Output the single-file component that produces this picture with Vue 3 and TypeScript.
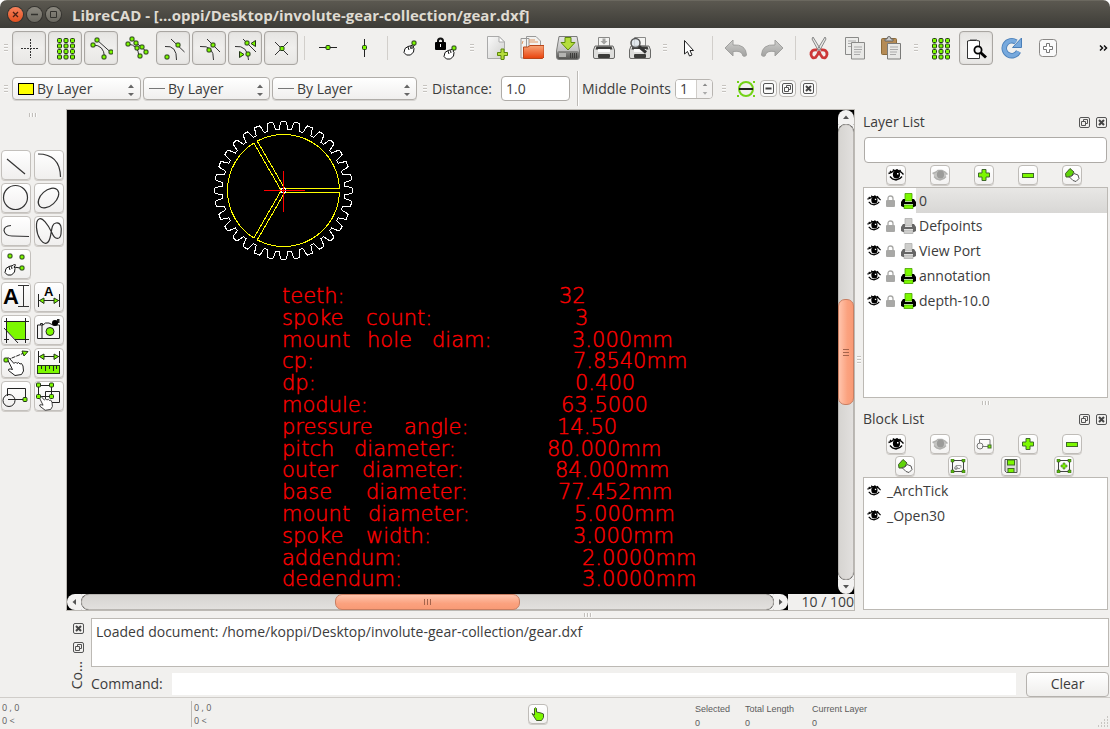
<script setup lang="ts">
import { ref } from 'vue'

type Item = { kind: 'btn' | 'sep' | 'grip'; icon?: string; label?: string; on?: boolean }
const b = (icon: string, label: string, on = false): Item => ({ kind: 'btn', icon, label, on })
const sep: Item = { kind: 'sep' }
const grip: Item = { kind: 'grip' }

const mainBar: Item[] = [
  grip,
  b('free', 'Free snap', true), b('grid', 'Snap on grid', true), b('ends', 'Snap on endpoints', true),
  b('entity', 'Snap on entity'), b('center', 'Snap center', true), b('middle', 'Snap middle', true),
  b('dist', 'Snap distance', true), b('inter', 'Snap intersection', true),
  sep, b('horiz', 'Restrict horizontal'), b('vert', 'Restrict vertical'),
  sep, b('relzero', 'Set relative zero'), b('lockzero', 'Lock relative zero'),
  grip, b('new', 'New'), b('open', 'Open'), b('save', 'Save'), b('print', 'Print'), b('preview', 'Print preview'),
  grip, b('pointer', 'Select'),
  sep, b('undo', 'Undo'), b('redo', 'Redo'),
  sep, b('cut', 'Cut'), b('copy', 'Copy'), b('paste', 'Paste'),
  grip, b('grid', 'Grid'), b('draft', 'Draft', true), b('reload', 'Redraw'), b('zoomin', 'Zoom in'),
]

type Glyph = { x: number; y: number; size: number }
type Tool = { icon: string; label: string; glyph?: Glyph }
const t = (icon: string, label: string, glyph?: Glyph): Tool => ({ icon, label, glyph })
const tools: (Tool | null)[] = [
  t('t-line', 'Lines'), t('t-arc', 'Arcs'),
  t('t-circle', 'Circles'), t('t-ellipse', 'Ellipses'),
  t('t-poly', 'Polylines'), t('t-spline', 'Splines'),
  t('t-points', 'Points'), null,
  t('t-text', 'Text', { x: 2, y: 22, size: 22 }), t('t-dim', 'Dimensions', { x: 10, y: 14, size: 13 }),
  t('t-hatch', 'Hatch'), t('t-image', 'Image'),
  t('t-modify', 'Modify'), t('t-measure', 'Measure'),
  t('t-block', 'Blocks'), t('t-select', 'Select'),
]

const layers = [
  { name: '0', print: true }, { name: 'Defpoints', print: false }, { name: 'View Port', print: false },
  { name: 'annotation', print: true }, { name: 'depth-10.0', print: true },
]
const blocks = ['_ArchTick', '_Open30']
const layerButtons = [['eye', 'Show all'], ['eye-off', 'Hide all'], ['plus', 'Add layer'], ['minus', 'Remove layer'], ['edit', 'Edit layer']]
const blockButtons = [['eye', 'Show all'], ['eye-off', 'Hide all'], ['blk', 'Create block'], ['plus', 'Add block'], ['minus', 'Remove block']]
const blockButtons2 = [['edit', 'Rename block'], ['blk-edit', 'Edit block'], ['blk-save', 'Save block'], ['blk-insert', 'Insert block']]

const distance = ref('1.0')
const middle = ref('1')
const command = ref('')
const filter = ref('')

type Word = [number, string]
const annotations: Word[][] = [
  [[215, 'teeth:'], [492, '32']],
  [[215, 'spoke'], [299, 'count:'], [508, '3']],
  [[215, 'mount'], [300, 'hole'], [365, 'diam:'], [505, '3.000mm']],
  [[215, 'cp:'], [506, '7.8540mm']],
  [[215, 'dp:'], [508, '0.400']],
  [[215, 'module:'], [494, '63.5000']],
  [[215, 'pressure'], [337, 'angle:'], [490, '14.50']],
  [[215, 'pitch'], [287, 'diameter:'], [480, '80.000mm']],
  [[215, 'outer'], [295, 'diameter:'], [488, '84.000mm']],
  [[215, 'base'], [299, 'diameter:'], [491, '77.452mm']],
  [[215, 'mount'], [301, 'diameter:'], [507, '5.000mm']],
  [[215, 'spoke'], [299, 'width:'], [506, '3.000mm']],
  [[215, 'addendum:'], [515, '2.0000mm']],
  [[215, 'dedendum:'], [515, '3.0000mm']],
]
const baseline = (i: number) => Math.round(193 + i * 21.8)

const polar = (r: number, a: number) => `${(r * Math.cos(a)).toFixed(2)} ${(-r * Math.sin(a)).toFixed(2)}`

function gearOutline(teeth: number): string {
  const step = (2 * Math.PI) / teeth
  const pts: string[] = []
  for (let i = 0; i < teeth; i++) {
    const a = i * step
    pts.push(polar(61, a - 0.072), polar(64, a - 0.058), polar(68, a - 0.046), polar(69, a - 0.034))
    pts.push(polar(69, a + 0.034), polar(68, a + 0.046), polar(64, a + 0.058), polar(61, a + 0.072))
  }
  return `M${pts.join('L')}Z`
}

function pocket(k: number): string {
  const third = (2 * Math.PI) / 3
  const off = Math.asin(2 / 56)
  const a0 = k * third + off
  const a1 = (k + 1) * third - off
  const corner = 2 / Math.sin(Math.PI / 3)
  return `M${polar(corner, (a0 + a1) / 2)}L${polar(56, a0)}A56 56 0 0 0 ${polar(56, a1)}Z`
}
const outline = gearOutline(32)
const pockets = [0, 1, 2].map(pocket)
</script>

<template>
  <svg class="sprite" aria-hidden="true">
    <defs>
      <linearGradient id="g-page" x1="0" y1="0" x2="1" y2="1"><stop offset="0" stop-color="#fafafa" /><stop offset="1" stop-color="#cfcfcd" /></linearGradient>
      <linearGradient id="g-fold" x1="0" y1="0" x2="0" y2="1"><stop offset="0" stop-color="#f8a578" /><stop offset="1" stop-color="#e8420c" /></linearGradient>
      <linearGradient id="g-metal" x1="0" y1="0" x2="0" y2="1"><stop offset="0" stop-color="#e8e8e8" /><stop offset="1" stop-color="#a6a6a6" /></linearGradient>
      <linearGradient id="g-front" x1="0" y1="0" x2="0" y2="1"><stop offset="0" stop-color="#8c8c8a" /><stop offset="1" stop-color="#555553" /></linearGradient>
      <linearGradient id="g-grey" x1="0" y1="0" x2="0" y2="1"><stop offset="0" stop-color="#cfcfcd" /><stop offset="1" stop-color="#a2a2a0" /></linearGradient>
      <rect id="dot" x="-2" y="-2" width="4" height="4" rx="1" fill="#7cf800" stroke="#24381a" />
      <path id="hand" d="M2 5.500 5 3.500 9 2.500 10.500 1 11.500 2 10 4 11 5.500 10.500 9 7.500 12 3.500 12 1 9.500Z M5 4 6 7M7.500 3.500 8 6" fill="#fff" stroke="#111" />
      <path id="bighand" d="M1 1.500Q2 0 3.500 1.500L8 6.500 9.500 5 11 6.500 12.500 5.500 14 7 15.500 6.500 17 9 17.500 14 15.500 17.500 9 18.500 2.500 13.500Q2 11.500 4.500 12L6.500 12.500Z" fill="#fff" stroke="#222" />
      <g id="printer"><path d="M6.500 1.500H17.500V10H6.500Z" fill="#f4f4f2" stroke="#8a8a88" /><path d="M3 10H21L22.500 14V21Q22.500 22.500 21 22.500H3Q1.500 22.500 1.500 21V14Z" fill="#dededc" stroke="#6a6a68" /><path d="M4.500 10.500H19.500L20.500 13.500H3.500Z" fill="#3c3c3a" /><rect x="6" y="13" width="12" height="3" fill="#fafafa" /><rect x="6" y="18" width="12" height="4" rx="1" fill="#3c3c3a" /></g>
    </defs>
    <symbol id="free" viewBox="0 0 24 24"><path d="M4 12.500H22M13.500 3V22" stroke="#333" stroke-dasharray="2 1" fill="none" /></symbol>
    <symbol id="grid" viewBox="0 0 24 24"><g v-for="y in 4" :key="y"><use v-for="x in 3" :key="x" href="#dot" :x="x * 6.5" :y="y * 5.5 - 1" /></g></symbol>
    <symbol id="ends" viewBox="0 0 24 24"><path d="M8 4 22 16.500M4 9Q15 9 15.500 21" fill="none" stroke="#333" /><use href="#dot" x="8" y="4" /><use href="#dot" x="22" y="16" /><use href="#dot" x="4" y="9" /><use href="#dot" x="15" y="21" /></symbol>
    <symbol id="entity" viewBox="0 0 24 24"><path d="M7 3 22 16M3 8Q13 9 14 20" fill="none" stroke="#333" /><use href="#dot" x="7" y="3" /><use href="#dot" x="3" y="8" /><use href="#dot" x="11" y="7" /><use href="#dot" x="12" y="12" /><use href="#dot" x="17" y="11" /><use href="#dot" x="21" y="16" /><use href="#dot" x="15" y="20" /></symbol>
    <symbol id="center" viewBox="0 0 24 24"><path d="M10 3 23.500 16M4 10.500Q16 9 15.500 24" fill="none" stroke="#333" /><use href="#dot" x="17" y="9" /><use href="#dot" x="6" y="21" /></symbol>
    <symbol id="middle" viewBox="0 0 24 24"><path d="M10 3 23 16M3 10.500Q17 9 16.500 24" fill="none" stroke="#333" /><use href="#dot" x="16" y="9" /><use href="#dot" x="12" y="14" /></symbol>
    <symbol id="dist" viewBox="0 0 24 24"><path d="M10 3 23 16M2 10.500Q15 9 15.500 24" fill="none" stroke="#333" /><use href="#dot" x="14" y="7" /><use href="#dot" x="15" y="18" /><path d="M22.500 4.500V10.500L18 7.500ZM6.500 15.500V21.500L11 18.500Z" fill="#7cf800" stroke="#24381a" /></symbol>
    <symbol id="inter" viewBox="0 0 24 24"><path d="M6 6 19 19M19 6 6 19" stroke="#333" /><use href="#dot" x="13" y="12.500" /></symbol>
    <symbol id="horiz" viewBox="0 0 24 24"><path d="M3 11.500H21" stroke="#222" /><use href="#dot" x="12" y="11.500" /></symbol>
    <symbol id="vert" viewBox="0 0 24 24"><path d="M12.500 3V21" stroke="#222" /><use href="#dot" x="12.500" y="11.500" /></symbol>
    <symbol id="relzero" viewBox="0 0 24 24"><use href="#hand" x="4" y="7" /><path d="M13 9V13" stroke="#111" /><use href="#dot" x="15" y="7" /></symbol>
    <symbol id="lockzero" viewBox="0 0 24 24"><path d="M3 7V5Q3 2.500 5.500 2.500T8 5V7" fill="none" stroke="#111" stroke-width="2" /><rect x="0" y="6" width="11" height="8" rx="1" fill="#000" /><rect x="5" y="8" width="1" height="3" fill="#fff" /><use href="#hand" x="8" y="11" /><use href="#dot" x="19" y="12" /></symbol>
    <symbol id="new" viewBox="0 0 24 24"><path d="M3.500.500H15L20.500 6V22.500H3.500Z" fill="url(#g-page)" stroke="#aaa" /><path d="M15 .500V6H20.500Z" fill="#fff" stroke="#aaa" /><path d="M17 13H20V16.500H23.500V19.500H20V23.500H17V19.500H13.500V16.500H17Z" fill="#b5dd3c" stroke="#5c8a08" /></symbol>
    <symbol id="open" viewBox="0 0 24 24"><path d="M1 2.500H9V22H1ZM6.500.500H16L20.500 5V15H6.500Z" fill="#f2f2f0" stroke="#999" /><path d="M2 8 3 5M9 4H15M9 6H18" stroke="#e09a68" /><path d="M3.500 11H8L10 9.500H24V21L22.500 22.500H3.500Z" fill="url(#g-fold)" stroke="#b8461a" /></symbol>
    <symbol id="save" viewBox="0 0 24 24"><path d="M3 .500H21L23.500 15V21Q23.500 23.500 21 23.500H3Q.500 23.500 .500 21V15Z" fill="url(#g-metal)" stroke="#7c7c7a" /><rect x="1" y="15" width="22" height="8" rx="2" fill="url(#g-front)" /><path d="M3 17H10V21H3Z" fill="#b4b4b2" /><path d="M14.500 17V22M16.500 17V22M18.500 17V22M20.500 17V22" stroke="#3c3c3a" /><path d="M9 1.500H15V6.500H19L12 14 5 6.500H9Z" fill="#b5dd3c" stroke="#5c8a08" /></symbol>
    <symbol id="print" viewBox="0 0 24 24"><use href="#printer" /><path d="M10.500 2.500H13.500V5H15.500L12 8.500 8.500 5H10.500Z" fill="#a4a4a2" /></symbol>
    <symbol id="preview" viewBox="0 0 24 24"><use href="#printer" /><circle cx="7.500" cy="7" r="4.500" fill="#dce4ea" fill-opacity=".8" stroke="#555" stroke-width="1.500" /><path d="M11 10.500 18 16.500" stroke="#333" stroke-width="3" /></symbol>
    <symbol id="pointer" viewBox="0 0 24 24"><path d="M7.500 4.500V18L10.500 15.500 12.500 20 15 19 13 14.500H16.500Z" fill="#fff" stroke="#222" /></symbol>
    <symbol id="undo" viewBox="0 0 24 24"><path d="M1 12 9 4V9Q22 8 22.500 19Q22 21 19 20 18 14 9 15.500V20Z" fill="url(#g-grey)" stroke="#a0a09e" /></symbol>
    <symbol id="redo" viewBox="0 0 24 24"><path d="M23 12 15 4V9Q2 8 1.500 19Q2 21 5 20 6 14 15 15.500V20Z" fill="url(#g-grey)" stroke="#a0a09e" /></symbol>
    <symbol id="cut" viewBox="0 0 24 24"><path d="M6 1 5 3 11 14 14 14ZM18 1 19 3 13 14 10 14Z" fill="#e8e8e6" stroke="#888" /><path d="M10 14Q4 13 4 18.500 5 23 8.500 21.500 11 19 12 15 13 19 15.500 21.500 19 23 20 18.500 20 13 14 14" fill="none" stroke="#cc3838" stroke-width="2.800" /></symbol>
    <symbol id="copy" viewBox="0 0 24 24"><path d="M2.500 1.500H15.500V18.500H2.500Z" fill="#ededeb" stroke="#8a8a88" /><path d="M5 5H13M5 7.500H13M5 10.500H9" stroke="#aaa" /><path d="M8.500 6.500H21.500V23H8.500Z" fill="#e8e8e6" stroke="#8a8a88" /><path d="M11 11H19M11 13.500H19M11 16H18M11 18.500H17" stroke="#aaa" /></symbol>
    <symbol id="paste" viewBox="0 0 24 24"><rect x="2.500" y="2.500" width="15" height="16" rx="1" fill="#b58b55" stroke="#8b6a3a" /><path d="M6 5V3H8Q8 .500 10 .500T12 3H14V5Z" fill="#ccc" stroke="#666" /><path d="M8.500 7.500H21.500V23H8.500Z" fill="#e8e8e6" stroke="#7a7a78" /><path d="M11 11H19M11 13.500H19M11 16H18M11 18.500H17" stroke="#aaa" /></symbol>
    <symbol id="draft" viewBox="0 0 24 24"><path d="M3.500 5V22.500H15.500V5L12.500 4.500H6Z" fill="#fff" stroke="#333" /><path d="M6 3.500H13" stroke="#999" /><circle cx="14" cy="14" r="3.600" fill="#f4f4f4" stroke="#000" stroke-width="1.800" /><path d="M16.500 16.500 22 21.500" stroke="#000" stroke-width="3" /></symbol>
    <symbol id="reload" viewBox="0 0 24 24"><path d="M18.500 15.500A7.500 7.500 0 1 1 16 6" fill="none" stroke="#4a7fb8" stroke-width="5.500" /><path d="M18.500 15.500A7.500 7.500 0 1 1 16 6" fill="none" stroke="#77a9dd" stroke-width="3.800" /><path d="M21.500 2V11.500H12.500Z" fill="#77a9dd" stroke="#4a7fb8" /></symbol>
    <symbol id="zoomin" viewBox="0 0 24 24"><rect x="3.500" y="3.500" width="17" height="17" rx="3" fill="#fafafa" stroke="#8a8886" /><path d="M10.500 7.500H13.500V10.500H16.500V13.500H13.500V16.500H10.500V13.500H7.500V10.500H10.500Z" fill="#fff" stroke="#777" /></symbol>

    <symbol id="t-line" viewBox="0 0 30 30"><path d="M6 9 24 24" stroke="#333" stroke-width="1.200" /></symbol>
    <symbol id="t-arc" viewBox="0 0 30 30"><path d="M4 4Q26 4 26.500 27" fill="none" stroke="#333" stroke-width="1.200" /></symbol>
    <symbol id="t-circle" viewBox="0 0 30 30"><circle cx="14.500" cy="14.500" r="12" fill="none" stroke="#333" stroke-width="1.200" /></symbol>
    <symbol id="t-ellipse" viewBox="0 0 30 30"><ellipse cx="14.500" cy="15" rx="12" ry="7.500" transform="rotate(-42 14.500 15)" fill="none" stroke="#333" stroke-width="1.200" /></symbol>
    <symbol id="t-poly" viewBox="0 0 30 30"><path d="M10 9.500Q3 10 3 14.500 4 20 11 20L28 20.500" fill="none" stroke="#333" stroke-width="1.200" /></symbol>
    <symbol id="t-spline" viewBox="0 0 30 30"><path d="M18 17C14 8 8 1 5 3 1 5 2 17 6 23S14 29 16 22 17 8 22 7 28 12 27 18 21 24 18 17Z" fill="none" stroke="#333" stroke-width="1.200" /></symbol>
    <symbol id="t-points" viewBox="0 0 30 30"><use href="#dot" x="9" y="7" /><use href="#dot" x="21" y="8" /><use href="#hand" x="3" y="14" /><path d="M13 18 19 19" stroke="#111" /><use href="#dot" x="21" y="19" /></symbol>
    <symbol id="t-text" viewBox="0 0 30 30"><path d="M17 3.500H28M17 24.500H28M22.500 4V24" stroke="#333" /></symbol>
    <symbol id="t-dim" viewBox="0 0 30 30"><path d="M4.500 12V25M25.500 12V25M5 18.500H25" stroke="#222" /><path d="M5.500 18.500 10 16V21.500ZM24.500 18.500 20 16V21.500Z" fill="#7cf800" stroke="#24381a" /></symbol>
    <symbol id="t-hatch" viewBox="0 0 30 30"><path d="M6 6H24V24H14L6 16Z" fill="#7cf800" /><path d="M3 6.500H28M5.500 3V28M24.500 3V28M3 24.500H8M14 24.500H28M3 13 17 28" stroke="#222" /></symbol>
    <symbol id="t-image" viewBox="0 0 30 30"><path d="M3.500 10V23.500H25.500V10H19L15 8H11.500L9 10ZM6.500 10V8.500H8.500V10M8 10V23" fill="#f4f4f4" stroke="#222" /><path d="M23 5.500H24V8" stroke="#222" stroke-width="3" fill="none" /><circle cx="21" cy="8" r="3" /><circle cx="16" cy="16.500" r="4" fill="#7cf800" stroke="#222" /></symbol>
    <symbol id="t-modify" viewBox="0 0 30 30"><path d="M6 12 23 5" stroke="#222" stroke-dasharray="4 1" /><path d="M21 3 27 3.500 23 8Z" fill="#7cf800" stroke="#24381a" /><use href="#bighand" x="5" y="9" /><use href="#dot" x="5" y="12" /></symbol>
    <symbol id="t-measure" viewBox="0 0 30 30"><path d="M4.500 3V15M25.500 3V15M5 8.500H25" stroke="#222" /><path d="M5.500 8.500 10 6V11.500ZM24.500 8.500 20 6V11.500Z" fill="#7cf800" stroke="#24381a" /><rect x="3.500" y="17.500" width="22" height="8" fill="#7cf800" stroke="#24381a" /><path d="M7.500 18V21M11.500 18V23M15.500 18V21M19.500 18V23M22.500 18V21" stroke="#222" /></symbol>
    <symbol id="t-block" viewBox="0 0 30 30"><path d="M6.500 15V7.500H24.500V17M7 18.500H24" fill="none" stroke="#222" /><circle cx="8" cy="19.500" r="6" fill="none" stroke="#222" /><use href="#dot" x="24" y="18.500" /></symbol>
    <symbol id="t-select" viewBox="0 0 30 30"><path d="M4.500 4.500H17.500V15.500H4.500ZM11.500 10.500H25.500V21.500H11.500Z" fill="none" stroke="#222" /><use href="#bighand" x="3" y="13" transform="translate(1 2.500) scale(.85)" /><use href="#dot" x="4.500" y="4" /><use href="#dot" x="17.500" y="4" /><use href="#dot" x="4.500" y="15.500" /><use href="#dot" x="17.500" y="15.500" /></symbol>

    <symbol id="eye" viewBox="0 0 16 14"><path d="M1 5 3 3.500 5 4 8 2.500 12 3 15 5.500 14 7.500 12 10.500 8 12 4 11 2 8Z" fill="#fff" /><path d="M.500 5.500 3.500 4.500 6 2.500 10 2.500 13 4 15.500 6.500M2 3 3.500 4.500M5 1.500 6 3M9 1 9 2.500M12.500 2 11.500 3.500M2 8.500 4.500 11 8 12 12 10.500 14 8.500" fill="none" stroke="#000" stroke-width="1.400" /><ellipse cx="8.500" cy="6.500" rx="3.600" ry="4" fill="#000" /><rect x="9" y="5" width="1.500" height="1.500" fill="#fff" /></symbol>
    <symbol id="eye-off" viewBox="0 0 16 14"><path d="M1 5 3 3.500 5 4 8 2.500 12 3 15 5.500 14 7.500 12 10.500 8 12 4 11 2 8Z" fill="#c4c4c2" /><path d="M.500 5.500 3.500 4.500 6 2.500 10 2.500 13 4 15.500 6.500M2 8.500 4.500 11 8 12 12 10.500 14 8.500" fill="none" stroke="#b0b0ae" stroke-width="1.400" /><ellipse cx="8.500" cy="6.500" rx="3.600" ry="4" fill="#9c9c9a" /></symbol>
    <symbol id="plus" viewBox="0 0 16 14"><path d="M6 1.500H10V5H13.500V9H10V12.500H6V9H2.500V5H6Z" fill="#7cf800" stroke="#3f6a28" /></symbol>
    <symbol id="minus" viewBox="0 0 16 14"><rect x="2.500" y="5.500" width="11" height="4" fill="#7cf800" stroke="#3f6a28" /></symbol>
    <symbol id="edit" viewBox="0 0 16 14"><path d="M1.500 5.500 6 .500 10 4 7 9 2 9Z" fill="#5fd40a" stroke="#3f5a28" /><path d="M5 8.500 8 8 10 5.500 14 7 15 10.500 12 13.500 9 12.500Z" fill="#fff" stroke="#555" /></symbol>
    <symbol id="blk" viewBox="0 0 16 14"><path d="M3.500 6V2.500H14V8.500M6 9.500H13" fill="none" stroke="#777" /><circle cx="4" cy="9" r="3" fill="none" stroke="#777" /><rect x="12" y="8" width="3" height="3" fill="#7cf800" stroke="#3f6a28" /></symbol>
    <symbol id="blk-edit" viewBox="0 0 16 14"><rect x="2.500" y="1.500" width="11" height="11" fill="none" stroke="#444" /><path d="M6 9V6.500H11V9M5 9.500H10" fill="none" stroke="#999" /><circle cx="6" cy="9" r="1.500" fill="none" stroke="#999" /><path d="M1 0H4V3H1ZM12 0H15V3H12ZM1 11H4V14H1ZM12 11H15V14H12Z" fill="#55b80c" stroke="#35561c" stroke-width=".5" /></symbol>
    <symbol id="blk-save" viewBox="0 0 16 14"><path d="M2 .500H14V13.500H3.500L2 12Z" fill="#dcdcda" stroke="#555" /><rect x="4.500" y="1" width="7" height="5" fill="#7cf800" stroke="#3f6a28" /><rect x="5" y="9.500" width="6" height="4" fill="#7cf800" stroke="#3f6a28" /></symbol>
    <symbol id="blk-insert" viewBox="0 0 16 14"><rect x="2.500" y="1.500" width="11" height="11" fill="none" stroke="#444" /><path d="M7 4H9V6H11V8H9V10H7V8H5V6H7Z" fill="#7cf800" stroke="#3f6a28" stroke-width=".6" /><path d="M1 0H4V3H1ZM12 0H15V3H12ZM1 11H4V14H1ZM12 11H15V14H12Z" fill="#55b80c" stroke="#35561c" stroke-width=".5" /></symbol>
    <symbol id="lock" viewBox="0 0 9 12"><path d="M2 6V3.500Q2 1 4.500 1T7 3.500V6" fill="none" stroke="#a8a8a6" stroke-width="1.300" /><rect x="0" y="5" width="9" height="7" rx="1" fill="#a8a8a6" /></symbol>
    <symbol id="prn-on" viewBox="0 0 15 16"><path d="M4 .500H11V8H4ZM3 12H12V15.500H3Z" fill="#7cf800" stroke="#48a000" stroke-width=".8" /><path d="M0 9 2 6H4V9H11V6H13L15 9V13L13 14H12V11H3V14H2L0 13Z" fill="#000" /></symbol>
    <symbol id="prn-off" viewBox="0 0 15 16"><path d="M4 .500H11V8H4ZM3 12H12V15.500H3Z" fill="#cdcdcb" stroke="#b0b0ae" stroke-width=".8" /><path d="M0 9 2 6H4V9H11V6H13L15 9V13L13 14H12V11H3V14H2L0 13Z" fill="#666" /></symbol>
    <symbol id="float" viewBox="0 0 11 11"><rect x=".5" y=".5" width="10" height="10" rx="1.500" fill="none" stroke="#555" /><path d="M4.500 5V2.500H8.500V6.500H6.500M2.500 4.500H6.500V8.500H2.500Z" fill="none" stroke="#555" /></symbol>
    <symbol id="close" viewBox="0 0 11 11"><rect x=".5" y=".5" width="10" height="10" rx="1.500" fill="none" stroke="#555" /><path d="M3 3 8 8M8 3 3 8" stroke="#444" stroke-width="2" /></symbol>
    <symbol id="collapse" viewBox="0 0 11 11"><rect x=".5" y=".5" width="10" height="10" rx="1.500" fill="none" stroke="#555" /><path d="M2.500 5.500H8.500" stroke="#444" stroke-width="2" /></symbol>
    <symbol id="updown" viewBox="0 0 8 12"><path d="M1 4 4 .500 7 4ZM1 9 4 12 7 9Z" fill="#666" /></symbol>
  </svg>

  <div class="window">
    <header class="titlebar">
      <button class="wm close" aria-label="Close"><svg viewBox="0 0 15 15"><path d="M5 5 10 10M10 5 5 10" stroke="#4a2014" stroke-width="1.300" /></svg></button>
      <button class="wm" aria-label="Minimize"><svg viewBox="0 0 15 15"><path d="M4 7.500H11" stroke="#33322e" stroke-width="1.300" /></svg></button>
      <button class="wm" aria-label="Maximize"><svg viewBox="0 0 15 15"><path d="M4.500 4.500H10.500V10.500H4.500Z" fill="none" stroke="#33322e" /></svg></button>
      <h1>LibreCAD - [...oppi/Desktop/involute-gear-collection/gear.dxf]</h1>
    </header>

    <nav class="toolbar" aria-label="Main tools">
      <template v-for="(it, i) in mainBar" :key="i">
        <span v-if="it.kind === 'grip'" class="grip"></span>
        <span v-else-if="it.kind === 'sep'" class="sep"></span>
        <button v-else class="tb" :class="{ on: it.on }" :aria-label="it.label"><svg><use :href="'#' + it.icon" /></svg></button>
      </template>
      <button class="more" aria-label="More tools"><svg viewBox="0 0 9 6"><path d="M1 .500 3.500 3 1 5.500M5 .500 7.500 3 5 5.500" fill="none" stroke="#111" stroke-width="1.500" /></svg></button>
    </nav>

    <nav class="toolbar second" aria-label="Pen and options">
      <span class="grip"></span>
      <div class="combo c1"><span class="swatch"></span><select aria-label="Pen color"><option>By Layer</option></select><svg><use href="#updown" /></svg></div>
      <div class="combo c2"><span class="line"></span><select aria-label="Pen width"><option>By Layer</option></select><svg><use href="#updown" /></svg></div>
      <div class="combo c3"><span class="line"></span><select aria-label="Line type"><option>By Layer</option></select><svg><use href="#updown" /></svg></div>
      <span class="grip"></span>
      <label class="dist" for="distance">Distance:</label>
      <input id="distance" v-model="distance" class="field distance" type="text" />
      <span class="vline"></span>
      <label class="mid" for="middle">Middle Points</label>
      <div class="spin">
        <input id="middle" v-model="middle" type="text" />
        <div class="steps"><button aria-label="Increase"><svg viewBox="0 0 6 4"><path d="M0 4 3 .500 6 4Z" fill="#888" /></svg></button><button aria-label="Decrease"><svg viewBox="0 0 6 4"><path d="M0 0 3 3.500 6 0Z" fill="#aaa" /></svg></button></div>
      </div>
      <span class="grip far"></span>
      <svg class="snapmid" viewBox="0 0 18 18"><circle cx="9" cy="9" r="7" fill="none" stroke="#73d216" stroke-width="2" /><path d="M2 9H16" stroke="#222" stroke-width="2" /><path d="M0 1H2V3H0ZM16 1H18V3H16ZM0 15H2V17H0ZM16 15H18V17H16Z" fill="#73d216" /></svg>
      <button class="mini" aria-label="Collapse"><svg><use href="#collapse" /></svg></button>
      <button class="mini" aria-label="Float"><svg><use href="#float" /></svg></button>
      <button class="mini last" aria-label="Close"><svg><use href="#close" /></svg></button>
    </nav>

    <div class="body">
      <aside class="left">
        <span class="hgrip"></span>
        <div class="tools">
          <template v-for="(tool, i) in tools" :key="i">
            <button v-if="tool" class="tool" :aria-label="tool.label">
              <svg viewBox="0 0 30 30"><use :href="'#' + tool.icon" width="30" height="30" /><text v-if="tool.glyph" :x="tool.glyph.x" :y="tool.glyph.y" :font-size="tool.glyph.size">A</text></svg>
            </button>
            <span v-else></span>
          </template>
        </div>
      </aside>

      <div class="rest">
        <div class="upper">
          <main class="view">
            <div class="drawing">
              <svg class="paper">
                <g transform="translate(216.500 80.500)" fill="none" shape-rendering="crispEdges">
                  <path :d="outline" stroke="#fff" />
                  <path v-for="(p, i) in pockets" :key="i" :d="p" stroke="#ff0" />
                  <circle r="2.500" stroke="#fff" />
                  <path d="M-20 0H21M0 -20V21" stroke="#f00" />
                </g>
                <g class="notes">
                  <text v-for="(row, i) in annotations" :key="i" :y="baseline(i)"><tspan v-for="(w, j) in row" :key="j" :x="w[0]">{{ w[1] }}</tspan></text>
                </g>
              </svg>
            </div>
            <div class="scroll v">
              <button class="arrow" aria-label="Scroll up"><svg viewBox="0 0 8 8"><path d="M1 6 4 2.500 7 6Z" fill="#555" /></svg></button>
              <div class="track"><span class="side"></span><span class="thumb"></span><span class="side"></span></div>
              <button class="arrow" aria-label="Scroll down"><svg viewBox="0 0 8 8"><path d="M1 2 4 5.500 7 2Z" fill="#555" /></svg></button>
            </div>
            <div class="foot">
              <div class="scroll h">
                <button class="arrow" aria-label="Scroll left"><svg viewBox="0 0 8 8"><path d="M6 1 2.500 4 6 7Z" fill="#555" /></svg></button>
                <div class="track"><span class="side"></span><span class="thumb"></span><span class="side"></span></div>
                <button class="arrow" aria-label="Scroll right"><svg viewBox="0 0 8 8"><path d="M2 1 5.500 4 2 7Z" fill="#555" /></svg></button>
              </div>
              <output class="ratio">10 / 100</output>
            </div>
          </main>

          <div class="vsplit"><span class="grip"></span></div>

          <aside class="docks">
            <section class="dock layers">
              <div class="head"><h2>Layer List</h2><button aria-label="Float layer list"><svg><use href="#float" /></svg></button><button aria-label="Close layer list"><svg><use href="#close" /></svg></button></div>
              <input v-model="filter" class="field filter" type="text" aria-label="Filter layers" />
              <div class="acts"><button v-for="a in layerButtons" :key="a[0]" class="act" :aria-label="a[1]"><svg><use :href="'#' + a[0]" /></svg></button></div>
              <ul class="list">
                <li v-for="(l, i) in layers" :key="l.name">
                  <svg class="e"><use href="#eye" /></svg><svg class="l"><use href="#lock" /></svg><svg class="p"><use :href="l.print ? '#prn-on' : '#prn-off'" /></svg>
                  <span class="name" :class="{ sel: i === 0 }">{{ l.name }}</span>
                </li>
              </ul>
            </section>
            <div class="hsplit"><span class="hgrip"></span></div>
            <section class="dock blocks">
              <div class="head"><h2>Block List</h2><button aria-label="Float block list"><svg><use href="#float" /></svg></button><button aria-label="Close block list"><svg><use href="#close" /></svg></button></div>
              <div class="acts tight"><button v-for="a in blockButtons" :key="a[0]" class="act" :aria-label="a[1]"><svg><use :href="'#' + a[0]" /></svg></button></div>
              <div class="acts four"><button v-for="a in blockButtons2" :key="a[0]" class="act" :aria-label="a[1]"><svg><use :href="'#' + a[0]" /></svg></button></div>
              <ul class="list">
                <li v-for="n in blocks" :key="n"><svg class="e"><use href="#eye" /></svg><span class="name blk">{{ n }}</span></li>
              </ul>
            </section>
          </aside>
        </div>

        <div class="bsplit"><span class="hgrip"></span></div>

        <section class="console">
          <div class="side-head">
            <button aria-label="Close command line"><svg><use href="#close" /></svg></button>
            <button aria-label="Float command line"><svg><use href="#float" /></svg></button>
            <span class="vtext">Co...</span>
          </div>
          <div class="cmd">
            <div class="log">Loaded document: /home/koppi/Desktop/involute-gear-collection/gear.dxf</div>
            <form class="prompt" @submit.prevent>
              <label for="command">Command:</label>
              <input id="command" v-model="command" type="text" />
              <button type="button" class="clear" @click="command = ''">Clear</button>
            </form>
          </div>
        </section>
      </div>
    </div>

    <footer class="status">
      <div class="coord first"><span>0 , 0</span><span>0 &lt;</span></div>
      <div class="coord second-c"><span>0 , 0</span><span>0 &lt;</span></div>
      <div class="mouse"><button class="act" aria-label="Mouse hints"><svg viewBox="0 0 16 14"><path d="M2 6.500 4.500 8V1.500Q5.500 0 6.500 1.500V5L11 6 13.500 7V10.500L11.500 13.500H6.500Z" fill="#7cf800" stroke="#3f5a28" /></svg></button></div>
      <dl>
        <div class="s1"><dt>Selected</dt><dd>0</dd></div>
        <div class="s2"><dt>Total Length</dt><dd>0</dd></div>
        <div class="s3"><dt>Current Layer</dt><dd>0</dd></div>
      </dl>
      <svg class="corner" viewBox="0 0 12 12"><path d="M10 1H11M7 4H11M4 7H11M1 10H11" stroke="#bbb8b4" stroke-dasharray="1 2" stroke-width="1.500" /></svg>
    </footer>
  </div>
</template>

<style>
html, body { background: #fff; }
body { margin: 0; }
</style>

<style scoped>
* { box-sizing: border-box; }
.sprite { position: absolute; width: 0; height: 0; }
.window {
  display: flex; flex-direction: column; height: 100vh; min-height: 640px;
  font-family: "Open Sans", "Noto Sans", sans-serif; font-size: 14px; line-height: 20px; color: #3c3c3c;
  background: #f1f0ee; border-radius: 7px 7px 0 0; overflow: hidden;
}
button, input, select { font: inherit; color: inherit; margin: 0; padding: 0; }
button { display: flex; align-items: center; justify-content: center; flex: none; background: none; border: 0; }
input { border: 0; outline: 0; min-width: 0; }
h1, h2, ul, dl, dd { margin: 0; padding: 0; }
svg { display: block; flex: none; }

.titlebar { flex: none; height: 28px; display: flex; align-items: center; gap: 4px; padding-left: 8px; background: linear-gradient(#5b5850, #3d3c37); border-top: 1px solid #6b685f; }
.titlebar h1 { margin-left: 7px; font-size: 15px; font-weight: 700; line-height: 20px; color: #dfdbd2; white-space: nowrap; }
.wm { width: 15px; height: 15px; border-radius: 50%; background: linear-gradient(#8b887f, #6b6961); box-shadow: 0 0 0 1px #34332f; }
.wm.close { background: linear-gradient(#f8825c, #e2501f); }
.wm svg { width: 15px; height: 15px; }

.toolbar { flex: none; display: flex; align-items: center; gap: 2px; height: 40px; position: relative; }
.grip { flex: none; width: 4px; height: 8px; margin: 0 3px 0 4px; background: repeating-linear-gradient(#c6c3bf 0 1px, #fbfbfa 1px 2px, transparent 2px 3px); }
.grip:first-child { margin-right: 2px; }
.sep { flex: none; width: 1px; height: 24px; margin: 0 4px; background: #d2cfcb; }
.tb { width: 34px; height: 34px; border: 1px solid transparent; border-radius: 4px; }
.tb.on { border-color: #a9a6a2; background: linear-gradient(#e6e5e3, #f0efed 50%, #e8e7e5); box-shadow: inset 0 0 2px #d0cecb; }
.tb svg { width: 24px; height: 24px; overflow: visible; }
.more { margin-left: auto; width: 14px; height: 20px; }
.more svg { width: 9px; height: 6px; }

.toolbar.second { height: 41px; }
.combo { flex: none; display: flex; align-items: center; height: 23px; padding: 0 5px; border: 1px solid #b0ada9; border-radius: 4px; background: linear-gradient(#fff, #f0efee); box-shadow: 0 1px 0 #d5d3d0; }
.combo select { flex: 1; min-width: 0; appearance: none; border: 0; background: none; outline: 0; }
.combo svg { width: 8px; height: 12px; margin-top: 2px; }
.c1 { width: 129px; }
.c2 { width: 127px; }
.c3 { width: 145px; }
.swatch { width: 16px; height: 12px; margin-right: 3px; background: #ff0; border: 1px solid #000; }
.line { width: 16px; height: 1px; margin-right: 3px; background: #777; }
.dist { width: 67px; }
.field { background: #fff; border: 1px solid #aeaba7; border-radius: 4px; }
.distance { width: 69px; height: 25px; padding: 0 4px; }
.vline { width: 2px; height: 35px; margin: 0 1px 0 5px; background: linear-gradient(90deg, #bdbab6 1px, #fff 1px); }
.mid { width: 91px; white-space: nowrap; }
.spin { display: flex; width: 38px; height: 20px; border: 1px solid #b8b5b1; border-radius: 4px; background: #fff; overflow: hidden; }
.spin input { width: 20px; padding-left: 4px; background: #fff; }
.steps { flex: 1; display: flex; flex-direction: column; background: #f3f2f1; border-left: 1px solid #d0cdc9; }
.steps button { flex: 1; }
.steps svg { width: 6px; height: 3px; }
.grip.far { margin-left: 7px; margin-right: 9px; }
.snapmid { width: 18px; height: 18px; margin-right: 3px; }
.mini { width: 17px; height: 17px; border: 1px solid #bdbab6; border-radius: 4px; background: #fafaf9; }
.mini.last { margin-left: 2px; }
.mini svg { width: 11px; height: 11px; }

.body { flex: 1; min-height: 0; display: flex; }
.left { flex: none; width: 66px; padding: 4px 1px; }
.hgrip { display: block; flex: none; width: 8px; height: 4px; margin: 0 auto; background: repeating-linear-gradient(90deg, #c2bfbb 0 1px, #fbfbfa 1px 2px, transparent 2px 3px); }
.tools { display: grid; grid-template-columns: 30px 30px; grid-auto-rows: 30px; gap: 3px; margin-top: 33px; }
.tool { border: 1px solid #c3c0bc; border-radius: 4px; background: linear-gradient(#fff, #f0efee); box-shadow: 0 1px 0 #cfccc8; width: 30px; height: 30px; }
.tool svg { width: 30px; height: 30px; fill: #000; font-family: "Liberation Sans", sans-serif; font-weight: 700; }

.rest { flex: 1; min-width: 0; display: flex; flex-direction: column; }
.upper { flex: 1; min-height: 0; display: flex; }
.view { flex: 1; min-width: 0; display: grid; grid-template-columns: minmax(0, 1fr) 16px; grid-template-rows: minmax(0, 1fr) 16px; border: 1px solid #bcb9b4; background: #000; }
.drawing { min-height: 0; overflow: hidden; }
.paper { width: 100%; height: 100%; }
.notes { fill: #f00; stroke: #f00; stroke-width: .4; font-family: "DejaVu Sans", sans-serif; font-weight: 200; font-size: 21px; }
.foot { grid-column: 1 / 3; display: flex; }
.scroll { display: flex; background: #000; }
.scroll.v { flex-direction: column; }
.scroll.h { flex: 1; }
.arrow { width: 14px; height: 16px; background: #f3f2f1; border-radius: 8px 0 0 8px; }
.arrow:last-child { border-radius: 0 8px 8px 0; }
.v .arrow { width: 16px; height: 14px; border-radius: 8px 8px 0 0; }
.v .arrow:last-child { border-radius: 0 0 8px 8px; }
.arrow svg { width: 8px; height: 8px; }
.track { flex: 1; min-width: 0; min-height: 0; display: flex; background: linear-gradient(#d6d4d1, #e2e0de); border: 1px solid #b8b5b1; border-radius: 8px; box-shadow: 0 0 0 3px #f3f2f1; clip-path: inset(0 -3px); }
.v .track { flex-direction: column; background: linear-gradient(90deg, #d6d4d1, #e2e0de); clip-path: inset(-3px 0); }
.side { flex: 254; }
.thumb { flex: 185; margin: -1px 0; border: 1px solid #c97e61; border-radius: 7px; background: repeating-linear-gradient(90deg, #a5644c 0 1px, transparent 1px 3px) center / 7px 6px no-repeat, linear-gradient(#ffc4ac, #fba27f 60%, #f99a75); }
.v .side { flex: 176; }
.v .thumb { flex: 104; margin: 0 -1px; background: repeating-linear-gradient(#a5644c 0 1px, transparent 1px 3px) center / 6px 7px no-repeat, linear-gradient(90deg, #ffc4ac, #fba27f 60%, #f99a75); }
.ratio { width: 66px; font-size: 14px; line-height: 16px; text-align: right; background: #f1f0ee; white-space: nowrap; }

.vsplit { flex: none; width: 8px; display: flex; align-items: center; }
.vsplit .grip { margin: 0 2px; }
.docks { flex: none; width: 247px; padding: 0 2px 1px 0; display: flex; flex-direction: column; }
.dock { display: flex; flex-direction: column; min-height: 0; }
.layers { flex: 289; }
.blocks { flex: 204; }
.head { flex: none; display: flex; align-items: center; gap: 6px; height: 26px; padding-right: 1px; }
.head h2 { flex: 1; font-size: 14px; font-weight: 400; line-height: 20px; }
.head svg, .side-head svg { width: 11px; height: 11px; }
.filter { flex: none; height: 26px; margin: 2px 1px 2px; width: auto; padding: 0 4px; }
.acts { flex: none; display: flex; justify-content: space-around; padding: 0 14px 0 11px; margin-bottom: 2px; }
.acts.tight { margin: 2px 0 2px; }
.acts.four { padding: 0 18px 0 15px; margin-bottom: 1px; }
.act { width: 20px; height: 20px; border: 1px solid #bfbcb8; border-radius: 4px; background: linear-gradient(#fff, #f3f2f1); box-shadow: 0 1px 0 #cfccc8; }
.act svg { width: 16px; height: 14px; }
.list { flex: 1; min-height: 0; list-style: none; background: #fff; border: 1px solid #bcb9b4; }
.list li { display: flex; align-items: center; height: 25px; padding-left: 3px; }
.list .e { width: 14px; height: 13px; }
.list .l { width: 9px; height: 12px; margin: 0 6px 0 5px; }
.list .p { width: 15px; height: 16px; }
.name { flex: 1; padding-left: 3px; line-height: 25px; }
.name.sel { background: linear-gradient(#e8e7e5, #d8d7d5); }
.name.blk { padding-left: 6px; }
.hsplit { flex: none; height: 8px; padding-top: 3px; }

.bsplit { flex: none; height: 7px; padding-top: 2px; }
.console { flex: none; display: flex; height: 79px; }
.side-head { flex: none; width: 25px; display: flex; flex-direction: column; align-items: center; gap: 8px; padding-top: 5px; }
.vtext { writing-mode: vertical-rl; transform: rotate(180deg); white-space: nowrap; line-height: 20px; margin-right: 4px; }
.cmd { flex: 1; min-width: 0; display: flex; flex-direction: column; padding-right: 1px; }
.log { flex: 1; background: #fff; border: 1px solid #bcb9b4; padding: 3px 4px; white-space: nowrap; }
.prompt { flex: none; display: flex; align-items: center; height: 30px; padding-top: 4px; }
.prompt label { width: 81px; }
.prompt input { flex: 1; height: 22px; background: #fff; padding: 0 4px; }
.clear { width: 83px; height: 25px; margin-left: 10px; border: 1px solid #b5b2ae; border-radius: 4px; background: linear-gradient(#fff, #efeeec); }

.status { flex: none; position: relative; display: flex; height: 32px; border-top: 1px solid #d0cdc9; font-size: 9px; line-height: 13px; color: #5c5c5c; }
.coord { display: flex; flex-direction: column; padding: 3px 0 0 2px; margin-bottom: 2px; }
.first { flex: 0 0 191px; }
.second-c { flex: 1; border-left: 1px solid #bdbab6; margin-top: 3px; padding-top: 0; }
.mouse { flex: 0 0 167px; padding-top: 6px; }
.status dl { flex: 0 0 415px; display: flex; padding-top: 4px; font-family: "Liberation Sans", sans-serif; line-height: 14px; }
.s1 { width: 50px; }
.s2 { width: 67px; }
.s3 { width: 80px; }
.status dt { white-space: nowrap; }
.corner { position: absolute; right: 1px; bottom: 1px; width: 12px; height: 12px; }
</style>
